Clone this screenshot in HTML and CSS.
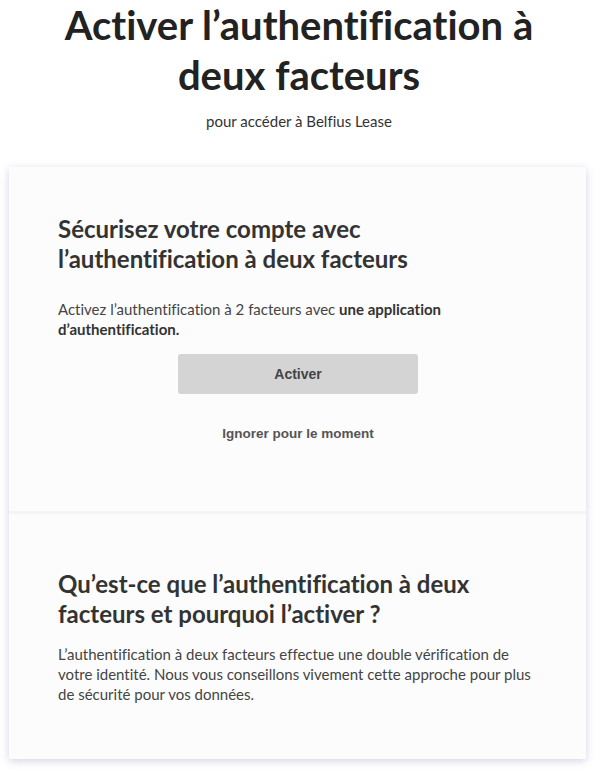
FILE: index.html
```html
<!DOCTYPE html>
<html lang="fr">
<head>
<meta charset="utf-8">
<link rel="stylesheet" href="styles.css">
</head>
<body>
<header class="hero">
  <h1 class="hero-title">Activer l’authentification à deux facteurs</h1>
  <p class="hero-sub">pour accéder à Belfius Lease</p>
</header>
<main class="card">
  <section class="card-section card-section--setup">
    <h2 class="section-title">Sécurisez votre compte avec l’authentification à deux facteurs</h2>
    <p class="section-text section-text--setup">Activez l’authentification à 2 facteurs avec <strong>une application d’authentification.</strong></p>
    <div class="actions">
      <button class="btn-primary" type="button">Activer</button>
      <button class="btn-link" type="button">Ignorer pour le moment</button>
    </div>
  </section>
  <section class="card-section card-section--info">
    <h2 class="section-title">Qu’est-ce que l’authentification à deux facteurs et pourquoi l’activer ?</h2>
    <p class="section-text section-text--info">L’authentification à deux facteurs effectue une double vérification de votre identité. Nous vous conseillons vivement cette approche pour plus de sécurité pour vos données.</p>
  </section>
</main>
</body>
</html>
```

FILE: styles.css
```css
html, body {
  margin: 0;
  padding: 0;
  background: #ffffff;
}
body {
  font-family: Lato, "Open Sans", sans-serif;
  font-variant-ligatures: none;
  color: #333;
}
.hero {
  text-align: center;
  padding: 0 30px;
}
.hero-title {
  margin: 0 auto;
  max-width: 520px;
  font-size: 40px;
  line-height: 50px;
  font-weight: 700;
  color: #222;
}
.hero-sub {
  margin: 11px 0 0;
  font-size: 15px;
  line-height: 20px;
  color: #333;
}
.card {
  margin: 36px 12px 10px 9px;
  background: #fcfcfd;
  box-shadow: 0 2px 8px rgba(90, 80, 150, 0.25);
}
.card-section {
  padding: 48px 40px 0 49px;
}
.card-section--setup {
  height: 347px;
  border-bottom: 3px solid #f4f4f6;
  box-sizing: border-box;
  padding-top: 47px;
  padding-right: 48px;
}
.card-section--info {
  padding-top: 55px;
  padding-bottom: 55px;
}
.section-title {
  margin: 0;
  font-size: 24px;
  line-height: 30px;
  font-weight: 700;
  color: #333;
  max-width: 430px;
}
.section-text {
  font-size: 15px;
  line-height: 20px;
  color: #444;
  max-width: 490px;
}
.section-text--setup {
  margin: 25px 0 0;
  max-width: 470px;
}
.section-text--info {
  margin: 15px 0 0;
}
.section-text strong {
  color: #333;
}
.actions {
  display: flex;
  flex-direction: column;
  align-items: center;
  margin-top: 15px;
}
.btn-primary {
  width: 240px;
  height: 40px;
  border: 0;
  border-radius: 3px;
  background: #d4d4d4;
  font-family: "Liberation Sans", Arial, sans-serif;
  font-weight: 700;
  font-size: 14px;
  color: #444;
}
.btn-link {
  margin-top: 32px;
  border: 0;
  background: none;
  font-family: "Liberation Sans", Arial, sans-serif;
  font-weight: 700;
  font-size: 13.5px;
  color: #555;
  padding: 0;
}
```
